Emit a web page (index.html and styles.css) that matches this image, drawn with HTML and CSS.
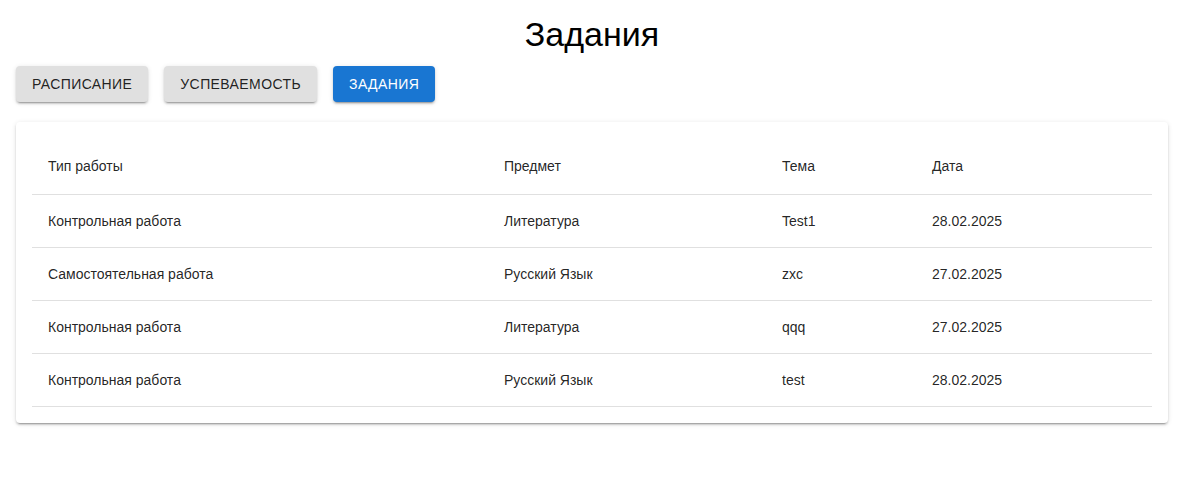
FILE: index.html
```html
<!DOCTYPE html>
<html lang="ru">
<head>
<meta charset="utf-8">
<title>Задания</title>
<link rel="stylesheet" href="styles.css">
</head>
<body>
<div class="page">
  <h1 class="title">Задания</h1>
  <div class="tabs">
    <button class="btn">Расписание</button>
    <button class="btn">Успеваемость</button>
    <button class="btn btn-primary">Задания</button>
  </div>
  <div class="card">
    <table class="table">
      <colgroup>
        <col class="c1"><col class="c2"><col class="c3"><col class="c4">
      </colgroup>
      <thead>
        <tr><th>Тип работы</th><th>Предмет</th><th>Тема</th><th>Дата</th></tr>
      </thead>
      <tbody>
        <tr><td>Контрольная работа</td><td>Литература</td><td>Test1</td><td>28.02.2025</td></tr>
        <tr><td>Самостоятельная работа</td><td>Русский Язык</td><td>zxc</td><td>27.02.2025</td></tr>
        <tr><td>Контрольная работа</td><td>Литература</td><td>qqq</td><td>27.02.2025</td></tr>
        <tr><td>Контрольная работа</td><td>Русский Язык</td><td>test</td><td>28.02.2025</td></tr>
      </tbody>
    </table>
  </div>
</div>
</body>
</html>
```

FILE: styles.css
```css
* { box-sizing: border-box; }
html, body { margin: 0; padding: 0; background: #fff; }
body {
  font-family: "Liberation Sans", Arial, sans-serif;
  color: rgba(0, 0, 0, 0.87);
}
.page {
  width: 1184px;
  padding: 13px 16px 16px 16px;
}
.title {
  margin: 0 0 11px 0;
  font-size: 34px;
  font-weight: 400;
  line-height: 42px;
  text-align: center;
  color: #000;
}
.tabs {
  display: flex;
  gap: 16px;
  margin-bottom: 20px;
}
.btn {
  font-family: "Liberation Sans", Arial, sans-serif;
  font-size: 14px;
  font-weight: 500;
  letter-spacing: 0.4px;
  text-transform: uppercase;
  line-height: 24px;
  height: 36px;
  padding: 6px 16px;
  border: 0;
  border-radius: 4px;
  background: #e0e0e0;
  color: rgba(0, 0, 0, 0.87);
  box-shadow: 0 3px 1px -2px rgba(0,0,0,0.2), 0 2px 2px 0 rgba(0,0,0,0.14), 0 1px 5px 0 rgba(0,0,0,0.12);
}
.btn-primary {
  background: #1976d2;
  color: #fff;
}
.card {
  width: 1152px;
  padding: 16px;
  background: #fff;
  border-radius: 4px;
  box-shadow: 0 3px 1px -2px rgba(0,0,0,0.2), 0 2px 2px 0 rgba(0,0,0,0.14), 0 1px 5px 0 rgba(0,0,0,0.12);
}
.table {
  width: 100%;
  border-collapse: collapse;
  table-layout: fixed;
  font-size: 14px;
}
.c1 { width: 456px; }
.c2 { width: 278px; }
.c3 { width: 150px; }
.c4 { width: 236px; }
.table th, .table td {
  text-align: left;
  padding: 16px;
  border-bottom: 1px solid #e0e0e0;
  color: rgba(0, 0, 0, 0.87);
}
.table th {
  font-weight: 500;
  line-height: 24px;
}
.table td {
  font-weight: 400;
  line-height: 20px;
}
```
